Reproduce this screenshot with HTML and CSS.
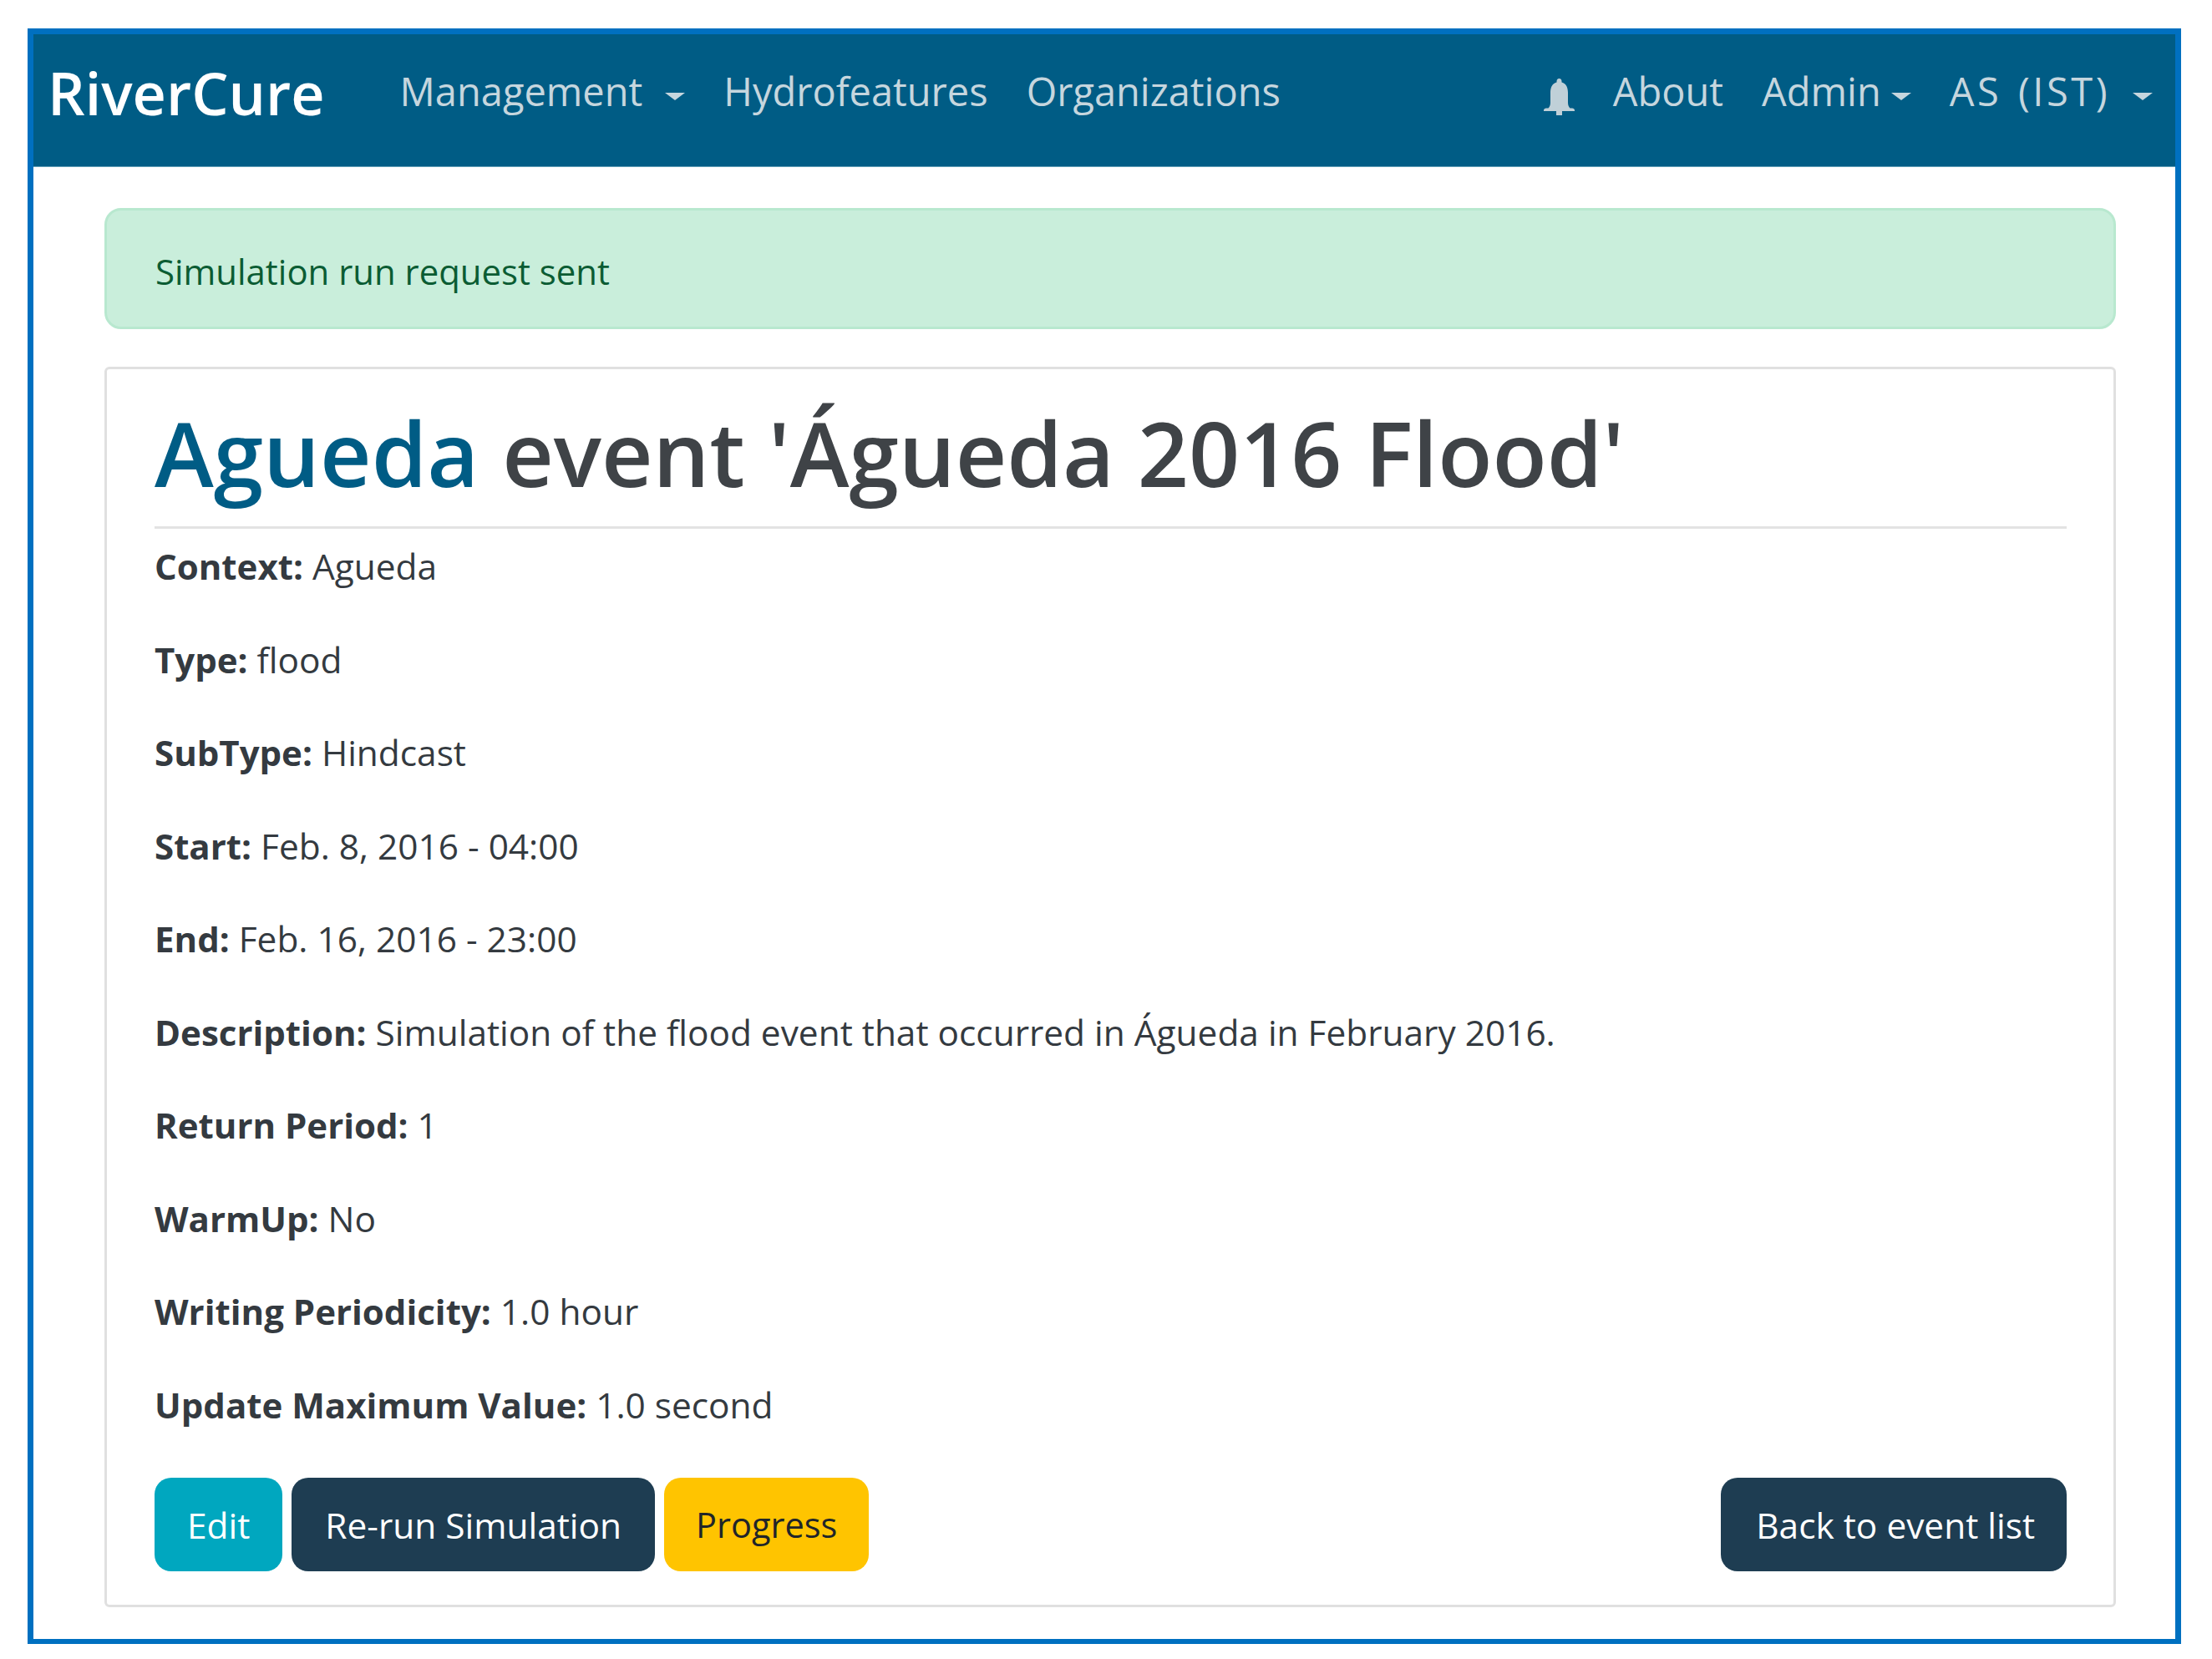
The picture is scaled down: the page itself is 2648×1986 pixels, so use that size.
FILE: index.html
```html
<!DOCTYPE html>
<html lang="en">
<head>
    <meta charset="UTF-8">
    <meta name="viewport" content="width=device-width, initial-scale=1.0">
    <title>RiverCure</title>
    <link rel="stylesheet" href="styles.css">
</head>
<body>
    <div class="frame">
        <nav class="navbar">
            <a class="brand" href="#">RiverCure</a>
            <ul class="nav-links">
                <li><a href="#" class="caret-link caret-wide">Management</a></li>
                <li><a href="#">Hydrofeatures</a></li>
                <li><a href="#">Organizations</a></li>
            </ul>
            <ul class="nav-links nav-right">
                <li>
                    <a href="#" class="bell-link" aria-label="Notifications">
                        <svg class="bell" viewBox="0 0 37 44">
                            <path d="M18.500 0c-2 0-3 1.500-3 3.500v1C10 6 8 11 8 17v12c0 3-1 5-2.500 6.500H3c-1.500 0-3 1-3 2.500v1h37v-1c0-1.500-1.500-2.500-3-2.500h-2.500C30 34 29 32 29 29V17c0-6-2-11-7.500-12.500v-1c0-2-1-3.500-3-3.500z"/>
                            <rect x="15" y="39" width="7" height="5"/>
                        </svg>
                    </a>
                </li>
                <li><a href="#">About</a></li>
                <li><a href="#" class="caret-link">Admin</a></li>
                <li><a href="#" class="caret-link caret-wide user-name">AS (IST)</a></li>
            </ul>
        </nav>

        <main class="content">
            <div class="alert">Simulation run request sent</div>

            <section class="card">
                <h1><span class="context-name">Agueda</span> event 'Águeda 2016 Flood'</h1>
                <p><strong>Context:</strong> Agueda</p>
                <p><strong>Type:</strong> flood</p>
                <p><strong>SubType:</strong> Hindcast</p>
                <p><strong>Start:</strong> Feb. 8, 2016 - 04:00</p>
                <p><strong>End:</strong> Feb. 16, 2016 - 23:00</p>
                <p><strong>Description:</strong> Simulation of the flood event that occurred in Águeda in February 2016.</p>
                <p><strong>Return Period:</strong> 1</p>
                <p><strong>WarmUp:</strong> No</p>
                <p><strong>Writing Periodicity:</strong> 1.0 hour</p>
                <p><strong>Update Maximum Value:</strong> 1.0 second</p>

                <div class="actions">
                    <a href="#" class="btn btn-edit">Edit</a>
                    <a href="#" class="btn btn-dark">Re-run Simulation</a>
                    <a href="#" class="btn btn-progress">Progress</a>
                    <a href="#" class="btn btn-dark btn-back">Back to event list</a>
                </div>
            </section>
        </main>
    </div>
</body>
</html>
```

FILE: styles.css
```css
* {
    box-sizing: border-box;
}

body {
    margin: 0;
    padding: 34px 37px 18px 33px;
    background-color: #fff;
    color: #343a40;
    font-family: "Open Sans", "Noto Sans", sans-serif;
    font-size: 42.4px;
}

a {
    text-decoration: none;
}

.frame {
    height: 1934px;
    border: 7px solid #0070c0;
    border-bottom-width: 6px;
}

.navbar {
    display: flex;
    align-items: center;
    height: 159px;
    padding: 0 27px 0 17px;
    background-color: #005c85;
    border-bottom: 1px solid #5f9db5;
}

.brand {
    margin-right: 90px;
    padding-bottom: 18px;
    color: #fff;
    font-size: 70px;
    font-weight: 600;
}

.nav-links {
    display: flex;
    align-items: center;
    gap: 46px;
    margin: 0;
    padding: 0 0 22px 0;
    list-style: none;
}

.nav-links a {
    color: #c6d6de;
    font-size: 47px;
}

.nav-right {
    margin-left: auto;
}

.bell {
    display: block;
    width: 37px;
    height: 44px;
    margin-top: 14px;
    fill: #c0d0d8;
}

.caret-link::after {
    content: "";
    display: inline-block;
    margin-left: 12px;
    vertical-align: 7px;
    border-top: 9px solid #c6d6de;
    border-left: 12px solid transparent;
    border-right: 12px solid transparent;
}

.caret-wide::after {
    margin-left: 27px;
}

.user-name {
    letter-spacing: 3.5px;
    word-spacing: 4px;
}

.content {
    padding: 49px 71px 0 85px;
}

.alert {
    height: 145px;
    padding: 48px 58px;
    margin-bottom: 45px;
    background-color: #c9eedb;
    border: 3px solid #b8e8cf;
    border-radius: 20px;
    color: #0b5c33;
    font-size: 41.9px;
    line-height: 50px;
}

.card {
    height: 1485px;
    padding: 0 56px 0 57px;
    border: 3px solid #e0e0e0;
    border-radius: 6px;
}

.card h1 {
    margin: 0 0 17px 0;
    padding: 36px 0 24px 0;
    border-bottom: 3px solid #e3e3e3;
    color: #3f4347;
    font-size: 107px;
    font-weight: 600;
    line-height: 128px;
}

.context-name {
    color: #005c85;
}

.card p {
    margin: 0 0 55.5px 0;
    line-height: 56px;
}

.card strong {
    font-size: 42px;
    font-weight: 700;
}

.actions {
    display: flex;
    gap: 11px;
    padding-top: 4px;
}

.btn {
    display: flex;
    align-items: center;
    height: 112px;
    padding: 0 40px;
    border-radius: 20px;
}

.btn-edit {
    padding: 0 39px;
    background-color: #00a7bf;
    color: #fff;
}

.btn-dark {
    background-color: #1e3d52;
    color: #fff;
}

.btn-progress {
    padding: 0 38px;
    background-color: #ffc400;
    color: #212529;
    font-size: 41.5px;
}

.btn-back {
    margin-left: auto;
    padding: 0 38px 0 42px;
}
```
